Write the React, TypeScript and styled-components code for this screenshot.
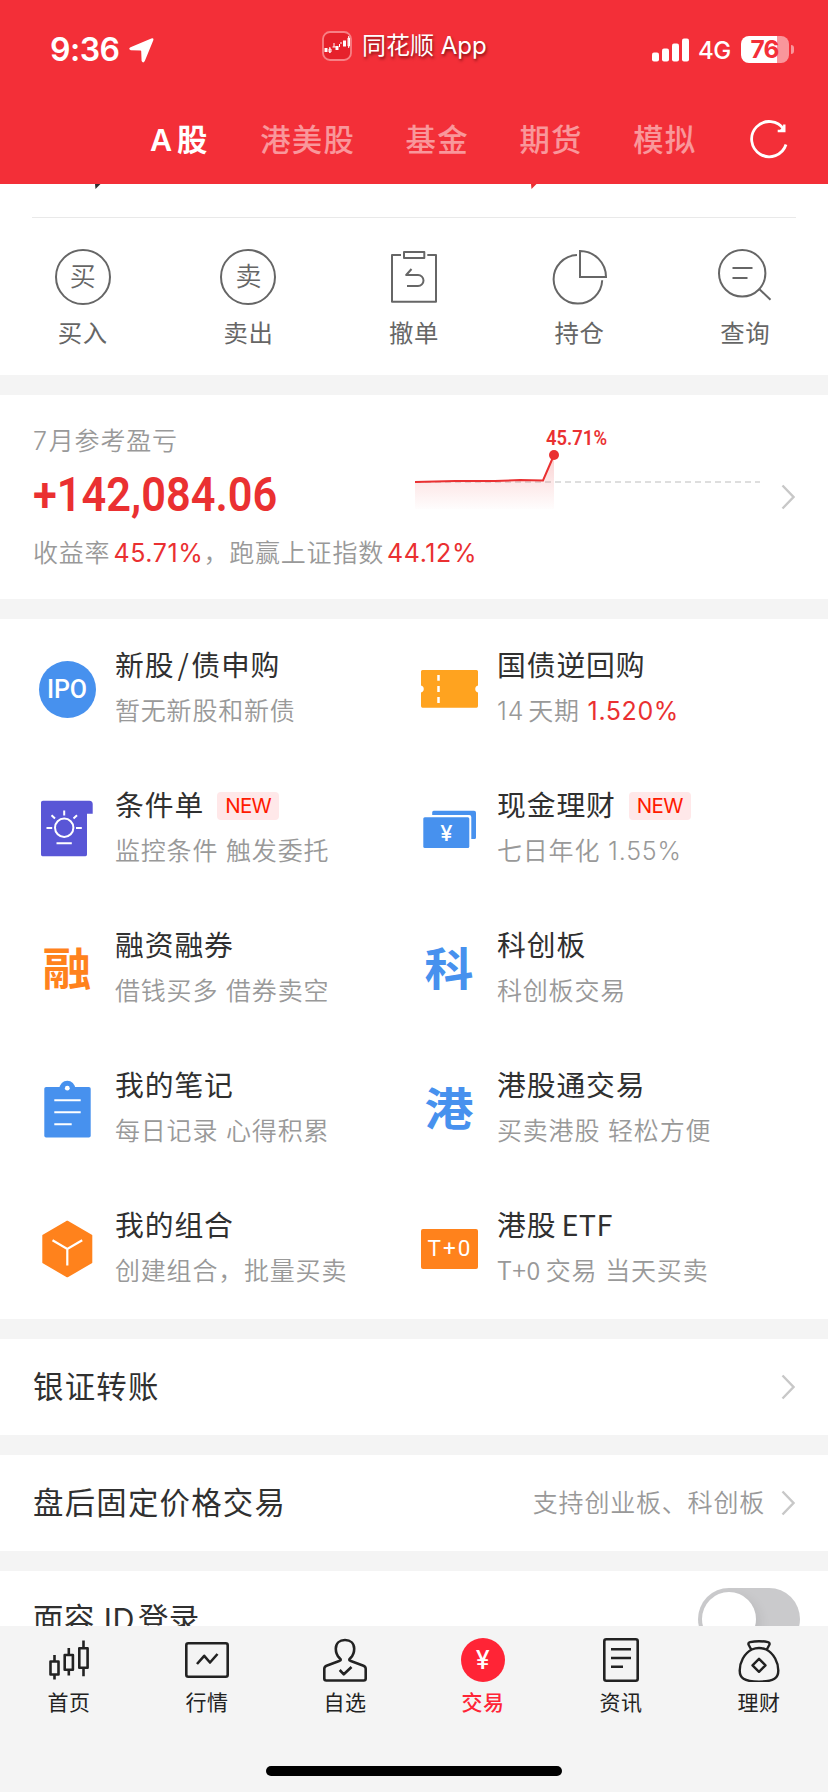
import React from 'react';
import styled, { createGlobalStyle } from 'styled-components';

const GlobalStyle = createGlobalStyle`
  * { box-sizing: border-box; }
  body {
    margin: 0;
    background: #f4f4f4;
    font-family: Inter, "Noto Sans CJK SC", sans-serif;
    text-autospace: no-autospace;
  }
  svg { display: block; flex: none; }
`;

const Screen = styled.div`
  width: 828px;
  height: 1792px;
  overflow: hidden;
  display: flex;
  flex-direction: column;
  background: #f4f4f4;
`;

/* ---------- header ---------- */

const Header = styled.header`
  height: 184px;
  flex: none;
  background: #f32f38;
  color: #fff;
`;

const StatusBar = styled.div`
  height: 96px;
  display: grid;
  grid-template-columns: 272px auto 1fr;
  align-items: start;
  padding: 0 34px 0 50px;
`;

const Clock = styled.div`
  display: flex;
  align-items: center;
  gap: 9px;
  padding-top: 30px;
  font-size: 32px;
  line-height: 40px;
  font-weight: 600;
  letter-spacing: -0.5px;
`;

const AppName = styled.div`
  display: flex;
  align-items: center;
  gap: 10px;
  padding-top: 31px;
  font-size: 24px;
  line-height: 30px;
  white-space: nowrap;
  text-shadow: 1px 2px 3px rgba(70, 0, 0, 0.65);
`;

const AppLogo = styled.svg`
  margin-top: -1px;
`;

const Signals = styled.div`
  display: flex;
  justify-content: flex-end;
  align-items: center;
  padding-top: 35px;
  height: 64px;
`;

const Network = styled.span`
  margin: 2px 10px 0 9px;
  font-size: 24px;
  line-height: 29px;
  font-weight: 500;
  letter-spacing: -0.3px;
`;

const Battery = styled.div`
  width: 48px;
  height: 27px;
  border-radius: 8px;
  background: linear-gradient(90deg, #fff 36px, #f9969b 36px);
  color: #f32f38;
  font-size: 24.5px;
  line-height: 27px;
  font-weight: 700;
  letter-spacing: -1px;
  text-align: center;
  padding-right: 1px;
`;

const BatteryNub = styled.div`
  width: 3px;
  height: 9px;
  margin-left: 2px;
  border-radius: 0 4px 4px 0;
  background: #f9969b;
`;

const Tabs = styled.nav`
  height: 88px;
  display: flex;
  align-items: center;
  padding-left: 150px;
`;

const Tab = styled.span<{ $active?: boolean; $gap?: number }>`
  margin-right: ${p => p.$gap ?? 50.4}px;
  font-size: 30.4px;
  line-height: 40px;
  font-weight: ${p => (p.$active ? 600 : 500)};
  letter-spacing: ${p => (p.$active ? 0.8 : 1.3)}px;
  white-space: nowrap;
  color: ${p => (p.$active ? '#fff' : 'rgba(255,255,255,0.5)')};
`;

/* ---------- body ---------- */

const Content = styled.main`
  height: 1442px;
  flex: none;
  overflow: hidden;
  display: flex;
  flex-direction: column;
  gap: 20px;
`;

const Card = styled.section<{ $h: number }>`
  height: ${p => p.$h}px;
  flex: none;
  background: #fff;
`;

const Peek = styled.div`
  height: 34px;
  margin: 0 32px;
  border-bottom: 1px solid #e9e9e9;
`;

const Actions = styled.div`
  display: grid;
  grid-template-columns: repeat(5, 1fr);
  padding-top: 31px;
`;

const Action = styled.div`
  display: flex;
  flex-direction: column;
  align-items: center;
  gap: 10px;
  color: #666;
  font-size: 24.4px;
  line-height: 36px;
  letter-spacing: 0.6px;
`;

const Ring = styled.div`
  width: 56px;
  height: 56px;
  border: 2px solid #666;
  border-radius: 50%;
  text-align: center;
  font-size: 26px;
  line-height: 51px;
  letter-spacing: 0;
  font-weight: 350;
`;

const Profit = styled(Card)`
  display: flex;
  padding: 28px 33px 0 33px;
`;

const ProfitText = styled.div`
  display: flex;
  flex-direction: column;
  width: 382px;
`;

const Muted = styled.div`
  font-size: 25px;
  line-height: 36px;
  letter-spacing: 0.8px;
  font-weight: 350;
  color: #999;
  white-space: nowrap;
`;

const Amount = styled.div`
  margin: 9px 0 14px;
  width: 300px;
  font-family: Roboto, sans-serif;
  font-size: 48px;
  line-height: 53px;
  font-weight: 600;
  color: #ea3031;
  transform: scaleX(0.902);
  transform-origin: left;
`;

const Red = styled.span<{ $ml?: number }>`
  margin-left: ${p => p.$ml ?? 0}px;
  color: #ea3031;
  font-weight: 400;
  letter-spacing: 0.6px;
`;

const ChevronSlot = styled.div`
  margin-left: auto;
  padding-top: 61px;
`;

const Features = styled(Card)`
  display: grid;
  grid-template-columns: 382px 1fr;
  grid-template-rows: repeat(5, 140px);
`;

const Feature = styled.div`
  display: flex;
  padding: 26px 0 0 37px;
`;

const FeatureIcon = styled.div`
  width: 60px;
  height: 60px;
  margin: 14px 18px 0 0;
  flex: none;
  display: flex;
  align-items: center;
  justify-content: center;
`;

const GlyphIcon = styled.span<{ $color: string }>`
  font-size: 49px;
  line-height: 60px;
  font-weight: 700;
  color: ${p => p.$color};
  transform: translateY(1px) scaleY(0.93);
`;

const IpoIcon = styled.span`
  width: 57px;
  height: 57px;
  border-radius: 50%;
  background: #4791ee;
  color: #fff;
  font: 500 25px/58px Roboto, sans-serif;
  letter-spacing: -0.1px;
  text-align: center;
`;

const TPlusIcon = styled.span`
  width: 57px;
  height: 40px;
  flex: none;
  border-radius: 2px;
  background: #ff821c;
  color: #fff;
  font: 400 22.5px/39px Roboto, sans-serif;
  letter-spacing: 2px;
  text-indent: 2px;
  text-align: center;
`;

const FeatureTitle = styled.div`
  display: flex;
  align-items: center;
  height: 42px;
  font-size: 28.8px;
  line-height: 42px;
  letter-spacing: 0.9px;
  color: #303030;
  white-space: nowrap;
`;

const FeatureSub = styled(Muted)`
  margin-top: 6px;
`;

const Latin = styled.span<{ $ml?: number; $mr?: number; $ls?: number }>`
  font-family: "Noto Sans CJK SC", sans-serif;
  line-height: 1;
  margin-left: ${p => p.$ml ?? 0}px;
  margin-right: ${p => p.$mr ?? 0}px;
  letter-spacing: ${p => p.$ls ?? 0.5}px;
`;

const Digits = styled.span<{ $ml?: number; $mr?: number }>`
  margin-left: ${p => p.$ml ?? 0}px;
  margin-right: ${p => p.$mr ?? 0}px;
`;

const Badge = styled.span`
  width: 62px;
  height: 28px;
  margin-left: 13px;
  border-radius: 4px;
  background: #ffe8e9;
  color: #ff1a00;
  font-size: 20.5px;
  line-height: 28px;
  letter-spacing: -0.7px;
  text-align: center;
`;

const Row = styled(Card)`
  display: flex;
  align-items: center;
  padding: 0 33px;
  font-size: 30.4px;
  letter-spacing: 1.25px;
  line-height: 44px;
  color: #303030;
  white-space: nowrap;
`;

const FaceIdLabel = styled.span`
  letter-spacing: 0.5px;
`;

const RowNote = styled(Muted)`
  margin-left: auto;
  margin-right: 16px;
`;

const RowEnd = styled.div`
  margin-left: auto;
`;

const Toggle = styled.div`
  width: 102px;
  height: 62px;
  margin: 0 -5px 0 auto;
  padding: 4px;
  border-radius: 31px;
  background: #cacacc;
`;

const Knob = styled.div`
  width: 54px;
  height: 54px;
  border-radius: 50%;
  background: #fff;
  box-shadow: 4px 4px 12px rgba(0, 0, 0, 0.08);
`;

/* ---------- bottom bar ---------- */

const BottomBar = styled.footer`
  height: 166px;
  display: flex;
  flex-direction: column;
  align-items: center;
  background: #f4f4f4;
`;

const NavItems = styled.div`
  width: 100%;
  height: 140px;
  display: grid;
  grid-template-columns: repeat(6, 1fr);
`;

const NavItem = styled.div<{ $active?: boolean }>`
  display: flex;
  flex-direction: column;
  align-items: center;
  padding-top: 8px;
  gap: 6px;
  font-size: 21px;
  line-height: 30px;
  letter-spacing: 0.6px;
  font-weight: ${p => (p.$active ? 500 : 400)};
  color: ${p => (p.$active ? '#ff2436' : '#222')};
`;

const HomeIndicator = styled.div`
  width: 296px;
  height: 10px;
  border-radius: 5px;
  background: #000;
`;

/* ---------- drawings ---------- */

const Chevron = () => (
  <svg width="14" height="26" viewBox="0 0 14 26" fill="none" stroke="#c8c8c8" strokeWidth="2.4">
    <path d="M1.5 1.5 L12.5 13 L1.5 24.5" />
  </svg>
);

const Line = ({ children, size = 56, w = 2 }: { children: React.ReactNode; size?: number; w?: number }) => (
  <svg width={size} height={size} viewBox={`0 0 ${size} ${size}`} fill="none" stroke="currentColor" strokeWidth={w} strokeLinejoin="round">
    {children}
  </svg>
);

const Pic = ({ children }: { children: React.ReactNode }) => (
  <svg width="60" height="60" viewBox="0 0 60 60" fill="none">{children}</svg>
);

const TicketIcon = () => (
  <Pic>
    <path fill="#ffa31f" d="M3.5 11 H57.5 Q59 11 59 12.5 V26.5 A3.6 3.6 0 0 0 59 33.5 V47 Q59 48.7 57.5 48.7 H3.5 Q2 48.7 2 47 V33.5 A3.6 3.6 0 0 0 2 26.5 V12.5 Q2 11 3.5 11 Z" />
    <path stroke="#fff" strokeWidth="2.5" d="M19.5 16 V21.7 M19.5 27 V33 M19.5 38 V44" />
  </Pic>
);

const BulbIcon = () => (
  <Pic>
    <path fill="#5956d6" d="M6 1.7 H52.5 Q55.7 2 55.7 5 V14.8 H50 V55.5 Q50 57.3 48.5 57.3 H5.5 Q4 57.3 4 55.5 V3.5 Q4 1.7 6 1.7 Z" />
    <g stroke="#fff" strokeWidth="2">
      <circle cx="27.2" cy="28.8" r="9.2" />
      <path d="M27.2 11.5 V16.5 M14.5 16.3 L18 19.6 M40 16.3 L36.5 19.6 M9.5 29 H15.2 M39 29 H44.8 M19.5 44.2 H34.8" />
    </g>
  </Pic>
);

const CashIcon = () => (
  <Pic>
    <path fill="#4791ee" d="M14.7 11.7 H55 Q57 11.7 57 13.7 V38.5 Q57 40 55.5 40 H52.3 V18 Q52.3 16 50.3 16 H13.2 V13.2 Q13.2 11.7 14.7 11.7 Z" />
    <rect x="4.3" y="18.3" width="46" height="30.7" rx="1.5" fill="#4791ee" />
    <text x="27.3" y="41.5" textAnchor="middle" fill="#fff" fontFamily="Inter" fontSize="22" fontWeight="500">¥</text>
  </Pic>
);

const NotesIcon = () => (
  <Pic>
    <circle cx="30.3" cy="9.5" r="7.8" fill="#4791ee" />
    <rect x="7.3" y="8" width="46.4" height="50.5" rx="1.8" fill="#4791ee" />
    <circle cx="30.3" cy="9.2" r="2.4" fill="#fff" />
    <path stroke="#fff" strokeWidth="2" d="M17.3 21.3 H43.7 M17.3 33.3 H43.7 M17.3 45.3 H34.7" />
  </Pic>
);

const CubeIcon = () => (
  <Pic>
    <path fill="#ff821c" stroke="#ff821c" strokeWidth="2" strokeLinejoin="round" d="M30.3 2.7 L54.3 16.5 V43.5 L30.3 57.3 L6.3 43.5 V16.5 Z" />
    <path stroke="#fff" strokeWidth="2.2" d="M15.5 21.3 L30.3 30 L45.2 21.3 M30.3 30 V46.5" />
  </Pic>
);

const features: { icon: React.ReactNode; title: React.ReactNode; sub: React.ReactNode; isNew?: boolean }[] = [
  { icon: <IpoIcon>IPO</IpoIcon>, title: <>新股<Latin $ml={3} $ls={2.5}>/</Latin>债申购</>, sub: '暂无新股和新债' },
  { icon: <TicketIcon />, title: '国债逆回购', sub: <><Digits $mr={4}>14</Digits>天期 <Red>1.520%</Red></> },
  { icon: <BulbIcon />, title: '条件单', sub: '监控条件 触发委托', isNew: true },
  { icon: <CashIcon />, title: '现金理财', sub: '七日年化 1.55%', isNew: true },
  { icon: <GlyphIcon $color="#ff821c">融</GlyphIcon>, title: '融资融券', sub: '借钱买多 借券卖空' },
  { icon: <GlyphIcon $color="#4791ee">科</GlyphIcon>, title: '科创板', sub: '科创板交易' },
  { icon: <NotesIcon />, title: '我的笔记', sub: '每日记录 心得积累' },
  { icon: <GlyphIcon $color="#4791ee">港</GlyphIcon>, title: '港股通交易', sub: '买卖港股 轻松方便' },
  { icon: <CubeIcon />, title: '我的组合', sub: '创建组合，批量买卖' },
  { icon: <TPlusIcon>T+0</TPlusIcon>, title: <>港股<Latin $ml={5}>ETF</Latin></>, sub: <><Latin $mr={5}>T+0</Latin>交易 当天买卖</> },
];

const actions = [
  { label: '买入', icon: <Ring>买</Ring> },
  { label: '卖出', icon: <Ring>卖</Ring> },
  {
    label: '撤单',
    icon: (
      <Line>
        <path d="M15 6 H6 V52.7 H50 V6 H41.3 M18 3 H38.3 V9 H18 Z M25.5 20 L20.2 26 H32 a5.5 5.5 0 0 1 0 11 H21" />
      </Line>
    ),
  },
  {
    label: '持仓',
    icon: (
      <Line>
        <path strokeLinejoin="miter" d="M25 6 A24.3 24.3 0 1 0 50.2 31.3 M28 28 V2 A26 26 0 0 1 54 28 Z" />
      </Line>
    ),
  },
  {
    label: '查询',
    icon: (
      <Line>
        <circle cx="25.2" cy="24.3" r="23.2" />
        <path d="M42.5 40.3 L53.5 50.7 M15.5 19 H35.5 M15.5 29 H30.5" />
      </Line>
    ),
  },
];

const navItems = [
  {
    label: '首页',
    icon: (
      <Line size={48} w={2.6}>
        <path d="M5.5 27.5 h8 v13 h-8 Z M9.5 21 V27 M9.5 41 V45.5 M19.7 21 h8.2 v14.7 h-8.2 Z M23.8 14 V21 M23.8 36 V41.5 M34.3 14.2 h8.3 v19.5 h-8.3 Z M38.5 6.5 V14 M38.5 34 V42.3" />
      </Line>
    ),
  },
  {
    label: '行情',
    icon: (
      <Line size={48} w={2.6}>
        <rect x="3.3" y="9.3" width="41.4" height="33.4" rx="2" />
        <path d="M14 30 L21.2 21.8 L27 28.5 L34.5 20" />
      </Line>
    ),
  },
  {
    label: '自选',
    icon: (
      <Line size={48} w={2.6}>
        <path d="M18.5 24 C15.6 21.2 14.8 18 14.8 14.7 C14.8 9.5 18.5 6 24 6 C29.5 6 33.2 9.5 33.2 14.7 C33.2 18 32.4 21.2 29.5 24 C27.8 25.6 27.8 26.4 29.8 27 L42.5 31.7 Q44.7 32.6 44.7 34.8 V44.5 Q44.7 46.5 42.7 46.5 H5.3 Q3.3 46.5 3.3 44.5 V34.8 Q3.3 32.6 5.5 31.7 L18.2 27 C20.2 26.4 20.2 25.6 18.5 24 M18.7 36 L22.8 40.3 L30.5 33" />
      </Line>
    ),
  },
  {
    label: '交易',
    active: true,
    icon: (
      <svg width="48" height="48" viewBox="0 0 48 48">
        <circle cx="24" cy="26" r="22" fill="#ff2436" />
        <text x="24" y="35" textAnchor="middle" fill="#fff" fontFamily="Inter" fontSize="25" fontWeight="500">¥</text>
      </svg>
    ),
  },
  {
    label: '资讯',
    icon: (
      <Line size={48} w={2.6}>
        <rect x="7.3" y="5.3" width="33.4" height="41.4" rx="2" />
        <path d="M14 15.3 H34 M14 24 H34 M14 32.7 H26" />
      </Line>
    ),
  },
  {
    label: '理财',
    icon: (
      <Line size={48} w={2.4}>
        <path d="M16.3 15.8 L13.5 10.5 Q13 8.8 15 8.2 Q24 6.2 33 8.2 Q35 8.8 34.5 10.5 L31.7 15.8 M16.8 15.5 Q24 12.5 31.2 15.5 C39 19.5 43.3 28.5 43.3 36.5 C43.3 44 39.5 47.6 24 47.6 C8.5 47.6 4.7 44 4.7 36.5 C4.7 28.5 9 19.5 16.8 15.5 Z M24 24.8 L30.5 31.3 L24 37.8 L17.5 31.3 Z" />
      </Line>
    ),
  },
];

const ProfitChart = () => (
  <svg width="346" height="110" viewBox="415 423 346 110" fill="none">
    <defs>
      <linearGradient id="fade" x1="0" y1="0" x2="0" y2="1">
        <stop offset="0" stopColor="#ea3031" stopOpacity="0.22" />
        <stop offset="1" stopColor="#ea3031" stopOpacity="0.01" />
      </linearGradient>
    </defs>
    <path stroke="#dedede" strokeWidth="2" strokeDasharray="6 4" d="M415 482 H760" />
    <path fill="url(#fade)" d="M415 482 L455 481 L500 481 L520 480 L543 480.5 L554 455 V509 H415 Z" />
    <path stroke="#ea3031" strokeWidth="2" d="M415 482 L455 481 L495 481 L520 480 L543 480.5 L554 455" />
    <circle cx="554" cy="455" r="5" fill="#ea3031" />
    <text x="546" y="445" fill="#ea3031" fontFamily="Roboto" fontSize="20" fontWeight="600" textLength="61" lengthAdjust="spacingAndGlyphs">45.71%</text>
  </svg>
);

export default function App() {
  return (
    <Screen>
      <GlobalStyle />
      <Header>
        <StatusBar>
          <Clock>
            9:36
            <svg width="25" height="25" viewBox="0 0 25 25">
              <path fill="#fff" d="M22.3 0.4 Q25 -0.4 24.3 2.3 L15.8 23 Q14.2 25.8 12.6 23 L12.2 13.3 Q12.2 12.6 11.4 12.6 L1.8 12.3 Q-1.2 11 1.5 9.2 Z" />
            </svg>
          </Clock>
          <AppName>
            <AppLogo width="30" height="30" viewBox="0 0 30 30">
              <rect x="1" y="1" width="28" height="28" rx="7" fill="#e6212b" stroke="#f78085" strokeWidth="1.8" />
              <path fill="#fff" d="M2.5 17 h3 v4 h-3 Z M13.5 15 h3 v4 h-3 Z M21 9.5 h3 v6 h-3 Z" />
              <path fill="none" stroke="#fff" strokeWidth="1" d="M7 18 h2 v3 h-2 Z M7.8 16 V22 M10.5 16 H14 M12 12 V16 M17.5 13 v3 M18 12 h2 M26 7 h1.5 v8 h-1.5 Z M26.7 5 V17" />
            </AppLogo>
            <span>同花顺 App</span>
          </AppName>
          <Signals>
            <svg width="37" height="24" viewBox="0 0 37 24" fill="#fff">
              <rect x="0" y="14.5" width="7" height="9" rx="2" />
              <rect x="10" y="10.5" width="7" height="13" rx="2" />
              <rect x="20" y="5.5" width="7" height="18" rx="2" />
              <rect x="30" y="0.5" width="7" height="23" rx="2" />
            </svg>
            <Network>4G</Network>
            <Battery>76</Battery>
            <BatteryNub />
          </Signals>
        </StatusBar>
        <Tabs>
          <Tab $active $gap={52}>A<Digits $ml={4}>股</Digits></Tab>
          <Tab>港美股</Tab>
          <Tab>基金</Tab>
          <Tab>期货</Tab>
          <Tab $gap={52}>模拟</Tab>
          <svg width="40" height="40" viewBox="0 0 40 40" fill="none" stroke="#fff" strokeWidth="2.8">
            <path d="M35 9.5 A17.6 17.6 0 1 0 37 24.5" />
            <path strokeWidth="2.4" d="M35.3 4.5 V11 H28.7" />
            <path fill="#fff" stroke="none" d="M36 5 V11.8 H29 Z" />
          </svg>
        </Tabs>
      </Header>

      <Content>
        <Card $h={191}>
          <Peek>
            <svg width="764" height="6" viewBox="32 0 764 6">
              <path fill="#303030" d="M95 0 H100.5 L95.5 5 Z" />
              <path fill="#ea3031" d="M531 0 H536.5 L531.5 5 Z" />
            </svg>
          </Peek>
          <Actions>
            {actions.map(a => (
              <Action key={a.label}>{a.icon}{a.label}</Action>
            ))}
          </Actions>
        </Card>

        <Profit $h={204}>
          <ProfitText>
            <Muted><Digits $mr={1}>7</Digits>月参考盈亏</Muted>
            <Amount>+142,084.06</Amount>
            <Muted>收益率<Red $ml={3}>45.71%</Red>，跑赢上证指数<Red $ml={3}>44.12%</Red></Muted>
          </ProfitText>
          <ProfitChart />
          <ChevronSlot><Chevron /></ChevronSlot>
        </Profit>

        <Features $h={700}>
          {features.map((f, i) => (
            <Feature key={i}>
              <FeatureIcon>{f.icon}</FeatureIcon>
              <div>
                <FeatureTitle><span>{f.title}</span>{f.isNew && <Badge>NEW</Badge>}</FeatureTitle>
                <FeatureSub>{f.sub}</FeatureSub>
              </div>
            </Feature>
          ))}
        </Features>

        <Row $h={96}>银证转账<RowEnd><Chevron /></RowEnd></Row>
        <Row $h={96}>盘后固定价格交易<RowNote>支持创业板、科创板</RowNote><Chevron /></Row>
        <Row $h={96}><FaceIdLabel>面容 <Digits $mr={3}>ID</Digits>登录</FaceIdLabel><Toggle><Knob /></Toggle></Row>
      </Content>

      <BottomBar>
        <NavItems>
          {navItems.map(n => (
            <NavItem key={n.label} $active={n.active}>{n.icon}{n.label}</NavItem>
          ))}
        </NavItems>
        <HomeIndicator />
      </BottomBar>
    </Screen>
  );
}
